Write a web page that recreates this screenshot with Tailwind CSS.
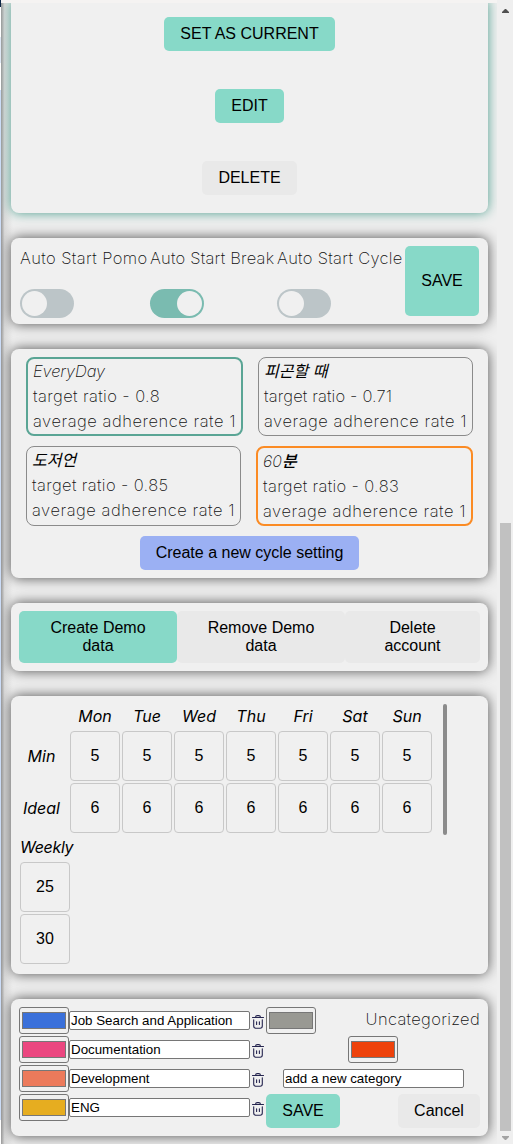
<!DOCTYPE html>
<html lang="en">
<head>
<meta charset="utf-8">
<title>Settings</title>
<script src="https://cdn.jsdelivr.net/npm/@tailwindcss/browser@4"></script>
</head>
<body class="flex h-[1144px] w-[513px] overflow-hidden bg-[#efefef] font-['Liberation_Sans','Noto_Sans_CJK_KR',sans-serif] text-base text-black">
<div class="flex w-px shrink-0 flex-col">
  <div class="h-[7px] bg-[#0b2545]"></div><div class="h-[30px] bg-white"></div><div class="h-[26px] bg-[#dfe8f5]"></div><div class="h-[27px] bg-white"></div><div class="h-[1030px] bg-[#cbdcf7]"></div><div class="grow bg-white"></div>
</div>
<main class="relative flex w-[496px] shrink-0 flex-col gap-[25px] overflow-hidden pr-[9px] pl-[10px]">
  <div class="absolute inset-y-0 left-0 w-3 bg-linear-to-r from-[#999999] via-[#dadada] via-30% to-[#efefef]"></div>
  <div class="absolute inset-x-0 top-0 z-10 h-[3px] bg-[#f5f3f2]"></div>
  <section class="relative flex h-[213px] shrink-0 flex-col items-center gap-[38px] rounded-b-lg bg-[#f0f0f0] pt-[17px] leading-[18px] shadow-[0_0_12px_#4f9f8f]">
    <button class="h-[34px] w-[171px] rounded-[5px] bg-[#87d9c8]">SET AS CURRENT</button>
    <button class="h-[34px] w-[69px] rounded-[5px] bg-[#87d9c8]">EDIT</button>
    <button class="h-[34px] w-[95px] rounded-[5px] bg-[#e9e9e9]">DELETE</button>
  </section>

  <section class="relative flex h-[86px] shrink-0 rounded-lg bg-[#f0f0f0] py-2 pl-[9px] font-[Inter,sans-serif] font-[250] whitespace-nowrap text-[#111] shadow-[0_0_13px_#505050]">
    <div class="w-[130px]"><p class="text-[16.5px] leading-[25px] tracking-[.4px]">Auto Start Pomo</p><div class="mt-[18px] flex h-[29px] w-[54px] items-center rounded-full bg-[#bcc5c8] p-[2px]"><i class="size-[25px] rounded-full bg-[#f0f0f0]"></i></div></div>
    <div class="w-[127px]"><p class="text-[16.5px] leading-[25px] tracking-[.22px]">Auto Start Break</p><div class="mt-[18px] flex h-[29px] w-[54px] items-center justify-end rounded-full bg-[#7abbb0] p-[2px]"><i class="size-[25px] rounded-full bg-[#f0f0f0]"></i></div></div>
    <div class="w-[128px]"><p class="text-[16.5px] leading-[25px] tracking-[.3px]">Auto Start Cycle</p><div class="mt-[18px] flex h-[29px] w-[54px] items-center rounded-full bg-[#bcc5c8] p-[2px]"><i class="size-[25px] rounded-full bg-[#f0f0f0]"></i></div></div>
    <button class="h-[70px] w-[74px] rounded-[5px] bg-[#87d9c8] font-['Liberation_Sans'] font-normal text-black">SAVE</button>
  </section>

  <section class="relative flex h-[229px] shrink-0 flex-col rounded-lg bg-[#f0f0f0] pt-2 pl-[15px] shadow-[0_0_13px_#505050]">
    <div class="flex w-[447px] flex-wrap justify-between gap-y-[10px] font-[Inter,'Noto_Sans_CJK_KR',sans-serif] text-[16.5px] leading-[25px] font-[250] whitespace-nowrap text-[#111]">
      <div class="h-[79px] w-[217px] rounded-lg border-2 border-[#5aa595] pl-[5px]"><p class="tracking-[-.15px] italic">EveryDay</p><p class="tracking-[.4px]">target ratio - 0.8</p><p class="tracking-[.54px]">average adherence rate 1</p></div>
      <div class="h-[79px] w-[215px] rounded-lg border border-[#8b8b8b] pl-[5px]"><p class="pt-px text-base leading-[25px] font-normal text-black italic">피곤할 때</p><p class="tracking-[.15px]">target ratio - 0.71</p><p class="tracking-[.54px]">average adherence rate 1</p></div>
      <div class="h-[80px] w-[215px] rounded-lg border border-[#8b8b8b] pt-px pl-[5px]"><p class="text-base leading-[25px] font-normal text-black italic">도저언</p><p class="tracking-[.37px]">target ratio - 0.85</p><p class="tracking-[.54px]">average adherence rate 1</p></div>
      <div class="h-[80px] w-[217px] rounded-lg border-2 border-[#fb8b24] pt-px pl-[5px]"><p class="text-base leading-[25px] italic">60<span class="font-medium text-black">분</span></p><p class="tracking-[.34px]">target ratio - 0.83</p><p class="tracking-[.54px]">average adherence rate 1</p></div>
    </div>
    <button class="mt-[10px] ml-[114px] h-[34px] w-[219px] rounded-[5px] bg-[#9bb0f3]">Create a new cycle setting</button>
  </section>

  <section class="relative flex h-[68px] shrink-0 rounded-lg bg-[#f0f0f0] p-2 leading-[18px] shadow-[0_0_13px_#505050]">
    <button class="w-[158px] shrink-0 rounded-[5px] bg-[#87d9c8]">Create Demo<br>data</button>
    <button class="w-[168px] shrink-0 rounded-[5px] bg-[#e9e9e9]">Remove Demo<br>data</button>
    <button class="w-[135px] shrink-0 rounded-[5px] bg-[#e9e9e9]">Delete<br>account</button>
  </section>

  <section class="relative h-[278px] shrink-0 rounded-lg bg-[#f0f0f0] pt-2 pl-[7px] shadow-[0_0_13px_#505050]">
    <div class="flex">
      <div id="days" class="grid h-[131px] w-[414px] grid-cols-[50px_repeat(7,50px)] grid-rows-[25px_50px_50px] gap-[2px]"></div>
      <div class="ml-[11px] h-[131px] w-1 rounded-full bg-[#8b8b8b]"></div>
    </div>
    <div class="ml-[2px] w-[50px]">
      <p class="h-[27px] font-[Inter] leading-[25px] font-[450] tracking-[-.3px] italic">Weekly</p>
      <div class="flex flex-col gap-[2px]">
        <div class="flex h-[50px] items-center justify-center rounded-[4px] border border-[#c8c8c8]">25</div>
        <div class="flex h-[50px] items-center justify-center rounded-[4px] border border-[#c8c8c8]">30</div>
      </div>
    </div>
  </section>

  <section class="relative flex h-[137px] shrink-0 rounded-lg bg-[#f0f0f0] py-2 pl-2 text-[13.33px] shadow-[0_0_13px_#505050]">
    <div id="categories" class="flex w-[247px] shrink-0 flex-col gap-[2px]"></div>
    <div class="flex w-[214px] flex-col gap-[2px]">
      <div class="flex h-[27px] justify-between">
        <div class="flex h-[27px] w-[50px] items-center justify-center rounded-[3px] border border-[#767676]"><i class="h-[17px] w-11 border border-[#777] bg-[#999993]"></i></div>
        <p class="font-[Inter] text-[16.5px] leading-[25px] font-[250] tracking-[.32px] text-[#111]">Uncategorized</p>
      </div>
      <div class="ml-[82px] flex h-[27px] w-[50px] items-center justify-center rounded-[3px] border border-[#767676]"><i class="h-[17px] w-11 border border-[#777] bg-[#ee420b]"></i></div>
      <div class="flex h-[27px] items-center pl-[17px]"><div class="h-[19px] w-[181px] rounded-[2px] border border-[#767676] bg-white pl-px leading-[17px]">add a new category</div></div>
      <div class="flex justify-between text-base">
        <button class="h-[34px] w-[74px] rounded-[5px] bg-[#87d9c8]">SAVE</button>
        <button class="h-[34px] w-[82px] rounded-[5px] bg-[#e9e9e9]">Cancel</button>
      </div>
    </div>
  </section>
</main>
<!-- page scrollbar -->
<aside class="flex w-4 shrink-0 flex-col items-center">
  <svg class="mt-[9px] h-1 w-[7px] shrink-0" viewBox="0 0 7 4"><path d="M0 4V3L3 0h1l3 3v1z" fill="#505050"/></svg>
  <div class="mt-[510px] h-[608px] w-[11px] shrink-0 bg-[#c1c1c1]"></div>
  <svg class="mt-[5px] h-1 w-[7px] shrink-0" viewBox="0 0 7 4"><path d="M0 0v1l3 3h1l3-3V0z" fill="#a3a3a3"/></svg>
</aside>
<script>
const label = (t, pad = '') => `<span class="self-center text-center font-[Inter] leading-[25px] font-[450] italic ${pad}">${t}</span>`;
const cell = v => `<span class="flex items-center justify-center rounded-[4px] border border-[#c8c8c8]">${v}</span>`;
document.getElementById('days').innerHTML =
  '<span></span>' + ['Mon','Tue','Wed','Thu','Fri','Sat','Sun'].map(d => label(d)).join('') +
  label('Min', 'pr-[3px]') + cell(5).repeat(7) + label('Ideal', 'pr-[3px]') + cell(6).repeat(7);
document.getElementById('categories').innerHTML = [
  ['#3a70da','Job Search and Application'],['#eb4780','Documentation'],['#ec7a5b','Development'],['#e6ad20','ENG']
].map(([c, t]) => `<div class="flex h-[27px] items-center">
  <div class="flex h-[27px] w-[50px] items-center justify-center rounded-[3px] border border-[#767676]"><i class="h-[17px] w-11 border border-[#777]" style="background:${c}"></i></div>
  <div class="h-[19px] w-[181px] rounded-[2px] border border-[#767676] bg-white pl-px leading-[17px]">${t}</div>
  <svg class="mt-[2px] ml-[2px] h-[14px] w-[12px]" viewBox="0 0 12 14" fill="none" stroke="#25254f" stroke-width="1.1" stroke-linecap="round"><path d="M.5 2.5h11M3.5 2.3C3.6 1.1 4.2.6 5.2.6h1.6c1 0 1.6.5 1.7 1.7M1.7 4.7V11c0 1.4.8 2.2 2.2 2.2h4.2c1.4 0 2.2-.8 2.2-2.2V4.7M4.6 6.8v2.6M7.4 6.8v2.6"/></svg>
</div>`).join('');
</script>
</body>
</html>
